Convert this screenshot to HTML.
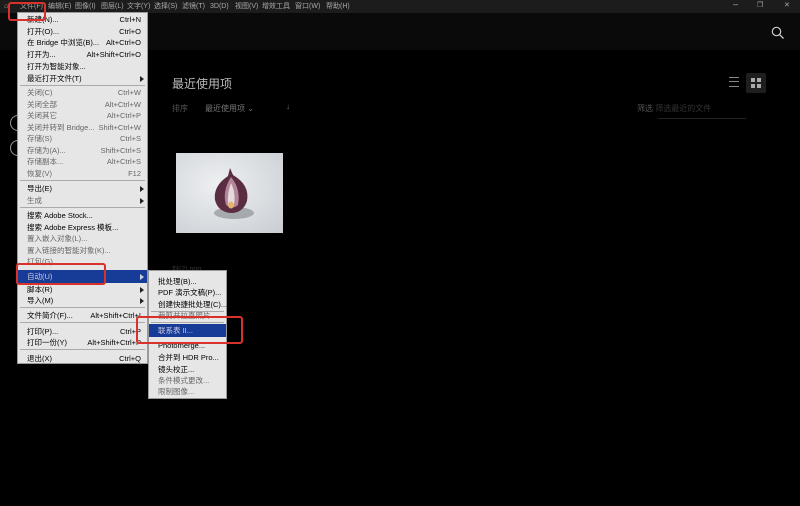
<!DOCTYPE html>
<html><head><meta charset="utf-8"><style>
*{margin:0;padding:0;box-sizing:border-box}
body{width:800px;height:506px;background:#000;position:relative;overflow:hidden;font-family:"Liberation Sans","Noto Sans CJK SC",sans-serif}
.a{position:absolute;white-space:nowrap}
#mb{left:0;top:0;width:800px;height:13px;background:#1c1c1c;font-size:7px;color:#aaa}
#mb span{position:absolute;top:2px;line-height:9px}
#tb{left:0;top:13px;width:800px;height:37px;background:#0a0a0a}
.menu{background:#e6e6e6;border:1px solid #999;font-size:7.5px;color:#000}
.it{position:absolute;left:0;right:0;height:11px;line-height:11px;padding-left:9px}
.it .k{position:absolute;right:6px}
.dim{color:#666}
.sep{position:absolute;left:2px;right:2px;height:1px;background:#aaa}
.hl{background:#173c98;color:#ccd}
.arr{position:absolute;right:3px;top:3px;width:0;height:0;border-left:4px solid #222;border-top:3px solid transparent;border-bottom:3px solid transparent}
.red{position:absolute;border:2px solid #d9312b;border-radius:3px}
</style></head><body>
<div id="mb" class="a">
<span style="left:4px">⌂</span><span style="left:20px">文件(F)</span><span style="left:48px">编辑(E)</span><span style="left:75px">图像(I)</span><span style="left:101px">图层(L)</span><span style="left:127px">文字(Y)</span><span style="left:154px">选择(S)</span><span style="left:182px">滤镜(T)</span><span style="left:210px">3D(D)</span><span style="left:235px">视图(V)</span><span style="left:262px">增效工具</span><span style="left:295px">窗口(W)</span><span style="left:326px">帮助(H)</span>
<span style="left:733px;top:0;font-size:9px">–</span><span style="left:757px;top:1px">❐</span><span style="left:784px;top:1px">✕</span>
</div>
<div id="tb" class="a"></div>
<svg class="a" style="left:771px;top:26px" width="14" height="14"><circle cx="5.5" cy="5.5" r="4.2" fill="none" stroke="#ccc" stroke-width="1.2"/><line x1="8.6" y1="8.6" x2="12.5" y2="12.5" stroke="#ccc" stroke-width="1.3"/></svg>
<div class="a" style="left:172px;top:75px;font-size:12px;color:#bbb">最近使用项</div>
<div class="a" style="left:172px;top:103px;font-size:8px;color:#555">排序</div>
<div class="a" style="left:205px;top:103px;font-size:8px;color:#777">最近使用项 ⌄</div>
<div class="a" style="left:286px;top:102px;font-size:8px;color:#777">↓</div>
<div class="a" style="left:637px;top:103px;font-size:8px;color:#555">筛选 <span style="color:#333">筛选最近的文件</span></div>
<div class="a" style="left:658px;top:118px;width:88px;height:1px;background:#222"></div>
<div class="a" style="left:729px;top:77px;width:10px;height:10px;border-top:1px solid #888;border-bottom:1px solid #888"><div style="margin-top:3px;height:1px;background:#888"></div></div>
<div class="a" style="left:746px;top:73px;width:20px;height:20px;background:#1e1e1e;border-radius:2px"></div>
<div class="a" style="left:751px;top:78px;width:4px;height:4px;background:#aaa"></div><div class="a" style="left:757px;top:78px;width:4px;height:4px;background:#aaa"></div><div class="a" style="left:751px;top:84px;width:4px;height:4px;background:#aaa"></div><div class="a" style="left:757px;top:84px;width:4px;height:4px;background:#aaa"></div>
<div class="a" style="left:176px;top:153px;width:107px;height:80px;background:radial-gradient(ellipse at 40% 40%,#eef0f2,#c9cdd2)">
<svg width="107" height="80"><ellipse cx="58" cy="60" rx="20" ry="6" fill="#70747a" opacity=".5"/><path d="M54 15 L57 22 Q74 32 71 48 Q67 60 55 60 Q42 59 39 47 Q37 33 52 23 Z" fill="#5a2d42"/><path d="M55 24 Q65 36 62 52 Q56 57 50 52 Q46 38 55 24Z" fill="#b3879a"/><path d="M55 30 Q60 40 58 52 Q55 54 52 52 Q51 40 55 30Z" fill="#e8d9df"/><ellipse cx="55" cy="52" rx="3" ry="3.5" fill="#e4b66b"/></svg></div>
<div class="a" style="left:172px;top:264px;font-size:7px;color:#333">封(2).png</div>
<div class="a" style="left:10px;top:115px;width:8px;height:16px;border:1px solid #999;border-right:none;border-radius:8px 0 0 8px"></div>
<div class="a" style="left:10px;top:140px;width:8px;height:16px;border:1px solid #999;border-right:none;border-radius:8px 0 0 8px"></div>

<div class="a menu" style="left:17px;top:12px;width:131px;height:352px">
<div class="it" style="top:1px">新建(N)...<span class="k">Ctrl+N</span></div>
<div class="it" style="top:13px">打开(O)...<span class="k">Ctrl+O</span></div>
<div class="it" style="top:24px">在 Bridge 中浏览(B)...<span class="k">Alt+Ctrl+O</span></div>
<div class="it" style="top:36px">打开为...<span class="k">Alt+Shift+Ctrl+O</span></div>
<div class="it" style="top:48px">打开为智能对象...</div>
<div class="it" style="top:60px">最近打开文件(T)<span class="arr"></span></div>
<div class="sep" style="top:72px"></div>
<div class="it dim" style="top:74px">关闭(C)<span class="k">Ctrl+W</span></div>
<div class="it dim" style="top:86px">关闭全部<span class="k">Alt+Ctrl+W</span></div>
<div class="it dim" style="top:97px">关闭其它<span class="k">Alt+Ctrl+P</span></div>
<div class="it dim" style="top:109px">关闭并转到 Bridge...<span class="k">Shift+Ctrl+W</span></div>
<div class="it dim" style="top:120px">存储(S)<span class="k">Ctrl+S</span></div>
<div class="it dim" style="top:132px">存储为(A)...<span class="k">Shift+Ctrl+S</span></div>
<div class="it dim" style="top:143px">存储副本...<span class="k">Alt+Ctrl+S</span></div>
<div class="it dim" style="top:155px">恢复(V)<span class="k">F12</span></div>
<div class="sep" style="top:167px"></div>
<div class="it" style="top:170px">导出(E)<span class="arr"></span></div>
<div class="it dim" style="top:182px">生成<span class="arr"></span></div>
<div class="sep" style="top:194px"></div>
<div class="it" style="top:197px">搜索 Adobe Stock...</div>
<div class="it" style="top:209px">搜索 Adobe Express 模板...</div>
<div class="it dim" style="top:220px">置入嵌入对象(L)...</div>
<div class="it dim" style="top:232px">置入链接的智能对象(K)...</div>
<div class="it dim" style="top:243px">打包(G)...</div>
<div class="it hl" style="top:257px;height:13px;line-height:13px">自动(U)<span class="arr" style="border-left-color:#ccd;top:4px"></span></div>
<div class="it" style="top:271px">脚本(R)<span class="arr"></span></div>
<div class="it" style="top:282px">导入(M)<span class="arr"></span></div>
<div class="sep" style="top:294px"></div>
<div class="it" style="top:297px">文件简介(F)...<span class="k">Alt+Shift+Ctrl+I</span></div>
<div class="sep" style="top:309px"></div>
<div class="it" style="top:313px">打印(P)...<span class="k">Ctrl+P</span></div>
<div class="it" style="top:324px">打印一份(Y)<span class="k">Alt+Shift+Ctrl+P</span></div>
<div class="sep" style="top:336px"></div>
<div class="it" style="top:340px">退出(X)<span class="k">Ctrl+Q</span></div>
</div>

<div class="a menu" style="left:148px;top:270px;width:79px;height:129px">
<div class="it" style="top:5px">批处理(B)...</div>
<div class="it" style="top:16px">PDF 演示文稿(P)...</div>
<div class="it" style="top:28px">创建快捷批处理(C)...</div>
<div class="sep" style="top:40px"></div>
<div class="it dim" style="top:39px">裁剪并拉直照片</div>
<div class="sep" style="top:51px"></div>
<div class="it hl" style="top:53px;height:13px;line-height:13px">联系表 II...</div>
<div class="it" style="top:69px">Photomerge...</div>
<div class="it" style="top:81px">合并到 HDR Pro...</div>
<div class="it" style="top:93px">镜头校正...</div>
<div class="it dim" style="top:104px">条件模式更改...</div>
<div class="it dim" style="top:115px">限制图像...</div>
</div>

<div class="red" style="left:8px;top:2px;width:38px;height:19px"></div>
<div class="red" style="left:16px;top:263px;width:90px;height:22px"></div>
<div class="red" style="left:136px;top:316px;width:107px;height:28px"></div>
</body></html>
